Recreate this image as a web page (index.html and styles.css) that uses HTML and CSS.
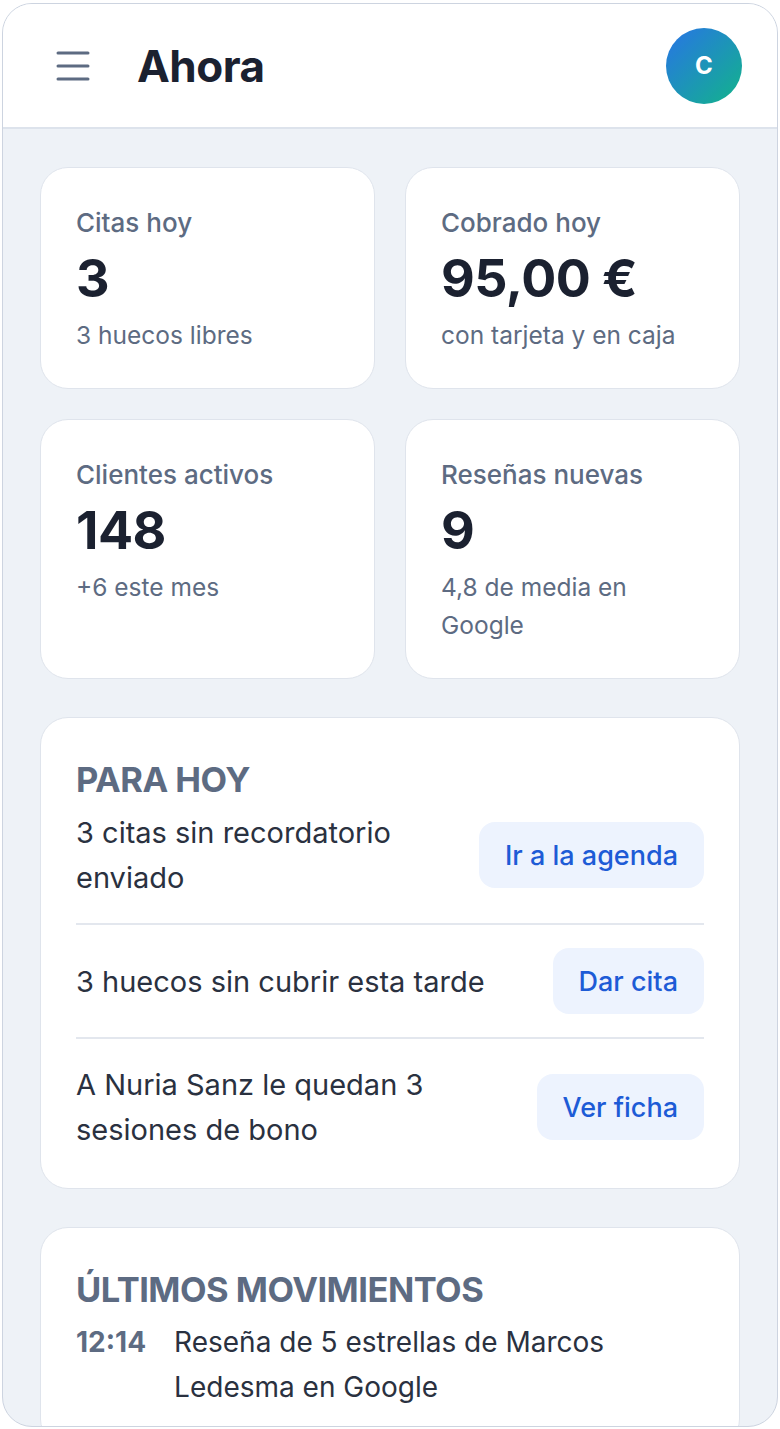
FILE: index.html
```html
<!DOCTYPE html>
<html lang="es">
<head>
    <meta charset="utf-8">
    <title>Ahora</title>
    <link rel="stylesheet" href="styles.css">
</head>
<body>
    <div class="app">
        <header class="topbar">
            <button class="menu-btn" aria-label="Menú">
                <svg width="34" height="30" viewBox="0 0 34 30">
                    <path d="M2 2h30M2 15h30M2 28h30" stroke="#5d6b82" stroke-width="3" stroke-linecap="round" fill="none"/>
                </svg>
            </button>
            <h1 class="title">Ahora</h1>
            <div class="avatar">C</div>
        </header>

        <main class="content">
            <div class="stats">
                <div class="stat-card">
                    <div class="stat-label">Citas hoy</div>
                    <div class="stat-value">3</div>
                    <div class="stat-sub">3 huecos libres</div>
                </div>
                <div class="stat-card">
                    <div class="stat-label">Cobrado hoy</div>
                    <div class="stat-value">95,00 €</div>
                    <div class="stat-sub">con tarjeta y en caja</div>
                </div>
                <div class="stat-card">
                    <div class="stat-label">Clientes activos</div>
                    <div class="stat-value">148</div>
                    <div class="stat-sub">+6 este mes</div>
                </div>
                <div class="stat-card">
                    <div class="stat-label">Reseñas nuevas</div>
                    <div class="stat-value">9</div>
                    <div class="stat-sub">4,8 de media en Google</div>
                </div>
            </div>

            <section class="panel">
                <h2 class="panel-title">Para hoy</h2>
                <div class="task">
                    <div class="task-text">3 citas sin recordatorio enviado</div>
                    <button class="task-btn">Ir a la agenda</button>
                </div>
                <div class="task">
                    <div class="task-text">3 huecos sin cubrir esta tarde</div>
                    <button class="task-btn">Dar cita</button>
                </div>
                <div class="task">
                    <div class="task-text">A Nuria Sanz le quedan 3 sesiones de bono</div>
                    <button class="task-btn">Ver ficha</button>
                </div>
            </section>

            <section class="panel">
                <h2 class="panel-title">Últimos movimientos</h2>
                <div class="move">
                    <div class="move-time">12:14</div>
                    <div class="move-text">Reseña de 5 estrellas de Marcos Ledesma en Google</div>
                </div>
            </section>
        </main>
    </div>
</body>
</html>
```

FILE: styles.css
```css
html, body {
    margin: 0;
    padding: 0;
    height: 100%;
    background: white;
}

body {
    padding: 3px 2px 2px;
    box-sizing: border-box;
    font-family: Inter, "Noto Sans", sans-serif;
    color: #1e2533;
}

.app {
    height: 100%;
    box-sizing: border-box;
    border: 1.5px solid #cdd4e0;
    border-radius: 30px;
    overflow: hidden;
    background: #eef2f7;
    display: flex;
    flex-direction: column;
}

.topbar {
    flex: none;
    height: 125px;
    box-sizing: border-box;
    background: white;
    border-bottom: 2px solid #dde3ec;
    display: flex;
    align-items: center;
    padding: 0 35px 0 53px;
}

.menu-btn {
    border: none;
    background: none;
    padding: 0;
    width: 34px;
    height: 30px;
    display: flex;
    cursor: pointer;
}

.title {
    margin: 0 0 0 47px;
    font-size: 44px;
    font-weight: 700;
    letter-spacing: -0.5px;
    color: #1b2130;
    flex: 1;
}

.avatar {
    width: 76px;
    height: 76px;
    border-radius: 50%;
    background: linear-gradient(135deg, #2874e6, #12b48a);
    color: white;
    font-size: 24px;
    font-weight: 700;
    display: flex;
    align-items: center;
    justify-content: center;
}

.content {
    flex: 1;
    overflow: hidden;
    padding: 38px 37px;
    display: flex;
    flex-direction: column;
    gap: 38px;
}

.stats {
    display: grid;
    grid-template-columns: 1fr 1fr;
    gap: 30px 30px;
}

.stat-card,
.panel {
    background: white;
    border: 1.5px solid #dfe4ec;
    border-radius: 28px;
}

.stat-card {
    padding: 36px 35px 34px;
}

.stat-label {
    font-size: 26px;
    font-weight: 500;
    line-height: 38px;
    color: #5d6b82;
}

.stat-value {
    font-size: 52px;
    font-weight: 700;
    line-height: 74px;
    letter-spacing: -0.5px;
    color: #1b2130;
}

.stat-sub {
    font-size: 24.5px;
    line-height: 38px;
    color: #5d6b82;
}

.panel {
    flex: none;
    padding: 35px 35px 36px;
}

.panel-title {
    margin: 0 0 3px;
    font-size: 34.5px;
    font-weight: 700;
    line-height: 54px;
    text-transform: uppercase;
    letter-spacing: -0.5px;
    color: #5d6b82;
}

.task {
    display: flex;
    align-items: center;
    gap: 24px;
    padding: 23px 0;
    border-top: 2px solid #e3e7ee;
}

.task:first-of-type {
    border-top: none;
    padding-top: 0;
}

.task:last-child {
    padding-bottom: 0;
}

.task-text {
    flex: 1;
    font-size: 29px;
    line-height: 45px;
    color: #2a3140;
}

.task-btn {
    flex: none;
    height: 66px;
    padding: 0 26px;
    border: none;
    border-radius: 16px;
    background: #edf3fe;
    color: #1d5bd6;
    font-family: inherit;
    font-size: 27px;
    font-weight: 500;
    cursor: pointer;
}

.move {
    display: flex;
    gap: 28px;
}

.move-time {
    flex: none;
    font-size: 28px;
    font-weight: 700;
    line-height: 45px;
    color: #5d6b82;
}

.move-text {
    font-size: 28px;
    line-height: 45px;
    color: #2a3140;
}
```
